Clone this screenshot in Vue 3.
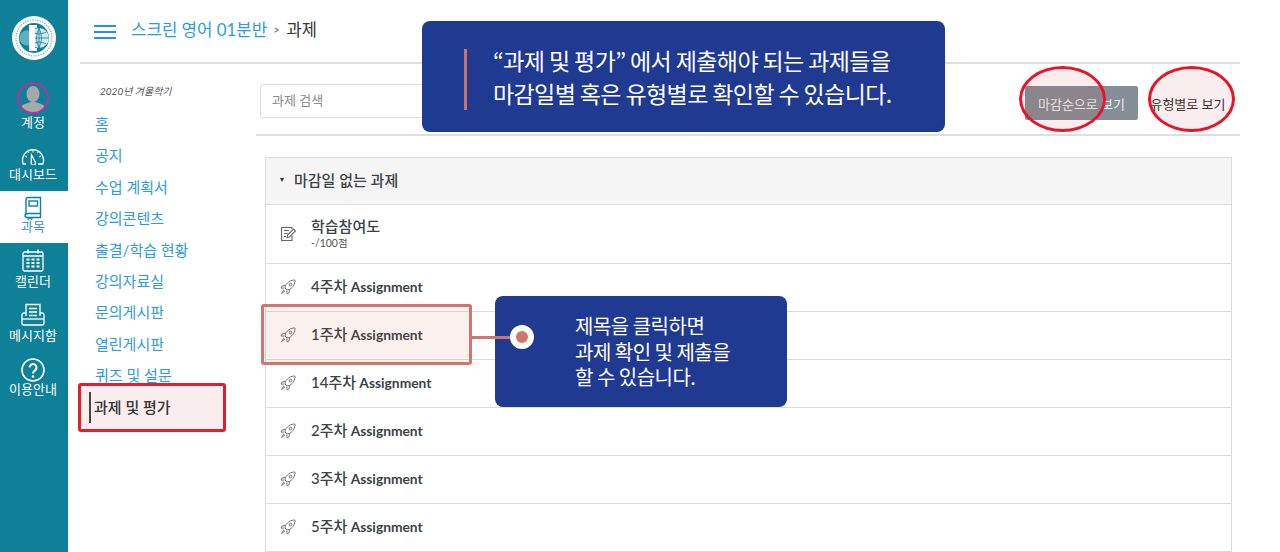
<template>
  <div class="page">
    <aside class="rail">
      <div class="rail__logo">
        <svg width="44" height="44" viewBox="0 0 44 44">
          <circle cx="22" cy="22" r="22" fill="#fff" />
          <circle cx="22" cy="22" r="18" fill="none" stroke="#7fb9c4" stroke-width="1.200" stroke-dasharray="1.500 1" />
          <circle cx="22" cy="22" r="15" fill="#0e8198" />
          <circle cx="27" cy="22" r="10" fill="#d3e8ec" />
          <path d="M18 22h19M27 12v20M20 16.500q7 3 14 0M20 27.500q7-3 14 0M27 12q-5 10 0 20M27 12q5 10 0 20" stroke="#0e8198" stroke-width="0.800" fill="none" />
          <circle cx="15" cy="22" r="7.500" fill="#5fb0c0" />
          <path d="M17 9h8v3h-2v20h2v3h-8z" fill="#fff" />
        </svg>
      </div>

      <a class="rail__item rail__item--account">
        <span class="avatar">
          <svg width="28" height="28" viewBox="0 0 28 28">
            <ellipse cx="14" cy="10" rx="6.500" ry="8" fill="#a8a8a8" />
            <path d="M1 25c1-5 8-6 13-7.500 5 1.500 12 2.500 13 7.500a14 14 0 0 1-26 0z" fill="#a8a8a8" />
          </svg>
        </span>
        <span>계정</span>
      </a>

      <a class="rail__item rail__item--board">
        <svg width="24" height="17" viewBox="0 0 24 17" fill="none" stroke="#fff" stroke-width="1.300">
          <path d="M5 16H2.200A10.500 10.500 0 1 1 21.800 16H17" />
          <path d="M12 2v2.500M4 8l1.800 1M20 8l-1.800 1M7 3.500l1 1.500M17 3.500l-1 1.500" stroke-width="1" />
          <path d="M10.500 7l3.500 6.500a2.200 2.200 0 1 1-3.800.8z" />
        </svg>
        <span>대시보드</span>
      </a>

      <a class="rail__item rail__item--course">
        <svg width="20" height="24" viewBox="0 0 20 24" fill="none" stroke="#0e8198" stroke-width="1.400">
          <path d="M3 19V3.500Q3 1.500 5 1.500H17.500V17.500H4.500Q2 17.500 2 19.500T4.500 21.500H17.500V17.500" />
          <rect x="6" y="5" width="8.500" height="5" />
          <path d="M5 21.500v2l2-1 2 1v-2" stroke-width="1" />
        </svg>
        <span>과목</span>
      </a>

      <a class="rail__item rail__item--calendar">
        <svg width="22" height="23" viewBox="0 0 22 23" fill="none" stroke="#fff" stroke-width="1.300">
          <rect x="1" y="3" width="20" height="19" rx="1.500" />
          <path d="M1 7h20M6 0.500v4M16 0.500v4" />
          <path d="M4.500 10.500h3M9.500 10.500h3M14.500 10.500h3M4.500 14h3M9.500 14h3M14.500 14h3M4.500 17.500h3M9.500 17.500h3M14.500 17.500h3" stroke-width="2" />
        </svg>
        <span>캘린더</span>
      </a>

      <a class="rail__item rail__item--inbox">
        <svg width="24" height="23" viewBox="0 0 24 23" fill="none" stroke="#fff" stroke-width="1.300">
          <path d="M5 13V1.500H19V13" />
          <path d="M8 5.500h8M8 9h8M8 12.500h8" />
          <path d="M5 10H3Q1 10 1 12V20Q1 22 3 22H21Q23 22 23 20V12Q23 10 21 10H19" />
          <path d="M1 16H23" />
        </svg>
        <span>메시지함</span>
      </a>

      <a class="rail__item rail__item--help">
        <svg width="24" height="24" viewBox="0 0 24 24" fill="none" stroke="#fff" stroke-width="1.600">
          <circle cx="12" cy="12" r="11" />
          <path d="M8.500 9.500a3.500 3.500 0 1 1 5.500 2.900c-1.300.9-2 1.500-2 3" stroke-width="2" />
          <circle cx="12" cy="18.500" r="1.300" fill="#fff" stroke="none" />
        </svg>
        <span>이용안내</span>
      </a>
    </aside>

    <div class="main">
      <header class="crumbs">
        <span class="burger"><i></i><i></i><i></i></span>
        <a class="crumbs__link">스크린 영어 01분반</a>
        <span class="crumbs__sep">&gt;</span>
        <span class="crumbs__here">과제</span>
      </header>

      <div class="body">
        <nav class="menu">
          <p class="menu__term">2020년 겨울학기</p>
          <a v-for="item in menuItems" :key="item" class="menu__link">{{ item }}</a>
          <a class="menu__link menu__link--on"><span>과제 및 평가</span></a>
        </nav>

        <section class="content">
          <div class="toolbar">
            <div class="search">과제 검색</div>
            <div class="toolbar__btns">
              <span class="ring ring--date">
                <button class="btn btn--active">마감순으로 보기</button>
              </span>
              <span class="ring ring--type">
                <button class="btn">유형별로 보기</button>
              </span>
            </div>
          </div>

          <div class="table">
            <div class="table__head"><span class="caret"></span>마감일 없는 과제</div>
            <div class="row row--tall">
              <svg class="row__icon" width="16" height="16" viewBox="0 0 16 16" fill="none" stroke="#666" stroke-width="1.100">
                <path d="M12 9.500V14.500H1.500V1.500H12V3" />
                <path d="M4 4.500h5M4 7.500h3.500M4 10.500h2" />
                <path d="M7 11.500l.5-2.500 6-6 2 2-6 6z" />
              </svg>
              <div>
                <div class="row__title row__title--ko">학습참여도</div>
                <div class="row__meta">-/100점</div>
              </div>
            </div>
            <div v-for="week in weeks" :key="week" class="row">
              <svg class="row__icon" width="16" height="16" viewBox="0 0 16 16" fill="none" stroke="#777" stroke-width="1">
                <path d="M15 1c-4 0-7 1.500-9.500 5.500L5 9l2 2 2.500-.5C13.500 8 15 5 15 1z" />
                <circle cx="10.500" cy="5.500" r="1.300" />
                <path d="M5.500 6.500L2 7l-1 2 3.500.2M9.500 10.500L9 14l-2 1-.2-3.500M4 11l-2.500 3.500L5 12" />
              </svg>
              <span class="row__title"><span class="row__title--ko">{{ week }}주차</span> Assignment</span>
            </div>
          </div>
        </section>
      </div>
    </div>

    <div class="note note--top">
      <span class="note__bar"></span>
      <p>“과제 및 평가” 에서 제출해야 되는 과제들을<br />마감일별 혹은 유형별로 확인할 수 있습니다.</p>
    </div>

    <div class="mark mark--row"></div>
    <div class="note note--row">
      <p>제목을 클릭하면<br />과제 확인 및 제출을<br />할 수 있습니다.</p>
    </div>
    <span class="leader"></span>
    <span class="dot"></span>
  </div>
</template>

<script setup>
const menuItems = [
  "홈",
  "공지",
  "수업 계획서",
  "강의콘텐츠",
  "출결/학습 현황",
  "강의자료실",
  "문의게시판",
  "열린게시판",
  "퀴즈 및 설문",
];

const weeks = [4, 1, 14, 2, 3, 5];
</script>

<style>
html,
body {
  margin: 0;
  overflow: hidden;
}
</style>

<style scoped>
* {
  box-sizing: border-box;
}
.page {
  position: relative;
  display: flex;
  width: 1280px;
  height: 552px;
  overflow: hidden;
  background: #fff;
  font-family: Lato, "Noto Sans CJK KR", sans-serif;
  color: #2d3b45;
}
.rail {
  width: 68px;
  flex: none;
  background: #0e8198;
  display: flex;
  flex-direction: column;
  align-items: stretch;
  padding-top: 16px;
}
.rail__logo {
  height: 44px;
  display: flex;
  justify-content: center;
  padding-right: 1px;
}
.rail__item {
  display: flex;
  flex-direction: column;
  align-items: center;
  color: #fff;
  font-size: 13px;
  line-height: 14px;
  padding-right: 2px;
}
.rail__item--account {
  margin-top: 22px;
  height: 48px;
}
.avatar {
  width: 32px;
  height: 32px;
  flex: none;
  border: 2px solid #b5329b;
  border-radius: 50%;
  overflow: hidden;
  margin-bottom: 1px;
}
.avatar svg {
  display: block;
}
.rail__item--board {
  height: 45px;
  margin-top: 16px;
  padding-top: 2px;
  gap: 2px;
}
.rail__item--course {
  height: 52px;
  padding-top: 5px;
  gap: 0;
  background: #fff;
  color: #3f9aad;
}
.rail__item--course span {
  margin-top: -1px;
}
.rail__item--calendar {
  height: 52px;
  padding-top: 6px;
  gap: 2px;
}
.rail__item--inbox {
  height: 54px;
  padding-top: 8px;
  gap: 2px;
}
.rail__item--help {
  padding-top: 9px;
  gap: 0;
}
.main {
  flex: none;
  width: 1160px;
  margin-left: 12px;
  display: flex;
  flex-direction: column;
}
.crumbs {
  height: 64px;
  flex: none;
  border-bottom: 2px solid #dcdfe2;
  display: flex;
  align-items: center;
  padding: 0 0 5px 14px;
  font-size: 16.800px;
}
.burger {
  width: 22px;
  display: flex;
  flex-direction: column;
  gap: 4px;
  margin-right: 15px;
  margin-top: 7px;
}
.burger i {
  display: block;
  height: 2px;
  background: #2f8fdc;
}
.crumbs__link {
  color: #2d9be0;
}
.crumbs__sep {
  font-size: 11px;
  color: #666;
  margin: 2px 7px 0 6px;
}
.crumbs__here {
  color: #333;
  font-size: 16.500px;
}
.body {
  display: flex;
  flex: 1;
  min-height: 0;
}
.menu {
  width: 176px;
  flex: none;
  display: flex;
  flex-direction: column;
  padding: 18px 0 0 15px;
  font-size: 15px;
}
.menu__term {
  margin: 0 0 9px 5px;
  height: 18px;
  font-size: 10px;
  line-height: 18px;
  font-style: italic;
  color: #555;
}
.menu__link {
  height: 31.400px;
  line-height: 31.400px;
  color: #2d9be0;
  white-space: nowrap;
}
.menu__link--on {
  position: relative;
  width: 148px;
  height: 49px;
  margin: -9px 0 0 -17px;
  border: 3px solid #e01f2f;
  border-radius: 3px;
  background: #f9eeed;
  color: #333;
  font-weight: 500;
  line-height: 43px;
  padding: 0 0 0 13px;
  z-index: 1;
}
.menu__link--on::before {
  content: "";
  position: absolute;
  left: 8px;
  top: 6px;
  bottom: 6px;
  width: 2px;
  background: #444;
}
.content {
  flex: 1;
  min-width: 0;
  display: flex;
  flex-direction: column;
}
.toolbar {
  height: 72px;
  flex: none;
  border-bottom: 2px solid #dcdfe2;
  display: flex;
  align-items: center;
  justify-content: space-between;
  padding: 8px 14px 0 4px;
}
.search {
  width: 300px;
  height: 34px;
  margin-bottom: 4px;
  border: 1px solid #dcdfe2;
  border-radius: 3px;
  font-size: 13px;
  line-height: 30px;
  padding-left: 11px;
  color: #8c8c8c;
}
.toolbar__btns {
  display: flex;
  align-items: center;
}
.ring {
  position: relative;
  display: flex;
}
.ring::after {
  content: "";
  box-sizing: border-box;
  position: absolute;
  top: -20px;
  width: 87px;
  height: 66px;
  border: 3px solid #e5152c;
  border-radius: 50%;
  background: rgba(180, 42, 30, 0.08);
  z-index: 2;
}
.ring--date::after {
  left: -6px;
}
.ring--type {
  margin-left: 12px;
}
.ring--type::after {
  left: -2px;
}
.btn {
  height: 34px;
  width: 113px;
  border: 0;
  border-radius: 2px;
  padding: 0;
  background: transparent;
  font-family: inherit;
  font-size: 13px;
  color: #333;
  white-space: nowrap;
}
.btn--active {
  background: #878f96;
  color: #eceef0;
}
.ring--type .btn {
  width: 76px;
}
.table {
  width: 967px;
  margin: 21px 0 0 9px;
  border: 1px solid #d9dde0;
  border-bottom: 0;
  flex: none;
}
.table__head {
  height: 47px;
  background: #f5f5f5;
  border-bottom: 1px solid #d9dde0;
  display: flex;
  align-items: center;
  padding: 0 0 3px 14px;
  font-size: 15px;
  font-weight: 500;
  color: #3a4348;
}
.caret {
  width: 0;
  height: 0;
  border-left: 2.500px solid transparent;
  border-right: 2.500px solid transparent;
  border-top: 4px solid #333;
  margin-right: 10px;
}
.row {
  height: 48px;
  display: flex;
  align-items: center;
  border-bottom: 1px solid #d9dde0;
  padding: 0 0 2px 14px;
  gap: 15px;
}
.row--tall {
  height: 59px;
  padding-bottom: 0;
}
.row__icon {
  flex: none;
}
.row__title {
  font-size: 13.800px;
  line-height: 18px;
  font-weight: 700;
  color: #3a4348;
}
.row__title--ko {
  font-size: 15px;
  font-weight: 500;
}
.row__meta {
  font-size: 10.500px;
  line-height: 16px;
  color: #555;
}
.note {
  position: absolute;
  background: #203a92;
  border-radius: 8px;
  color: #fff;
  font-family: "Noto Sans CJK KR", sans-serif;
}
.note p {
  margin: 0;
}
.note--top {
  left: 422px;
  top: 21px;
  width: 523px;
  height: 111px;
  padding: 23px 0 0 71px;
  font-size: 23px;
  line-height: 33px;
  letter-spacing: -0.600px;
  white-space: nowrap;
}
.note__bar {
  position: absolute;
  left: 42px;
  top: 28px;
  width: 3px;
  height: 61px;
  background: #c9716b;
}
.note--row {
  left: 495px;
  top: 296px;
  width: 292px;
  height: 111px;
  padding: 17px 0 0 80px;
  font-size: 20px;
  line-height: 25.500px;
  letter-spacing: -0.500px;
}
.mark--row {
  position: absolute;
  left: 261px;
  top: 304px;
  width: 211px;
  height: 61px;
  border: 3px solid #cf7670;
  border-radius: 3px;
  background: rgba(200, 90, 70, 0.09);
}
.leader {
  position: absolute;
  left: 472px;
  top: 336px;
  width: 48px;
  height: 3px;
  background: #cf7670;
}
.dot {
  position: absolute;
  left: 510px;
  top: 325px;
  width: 24px;
  height: 24px;
  border-radius: 50%;
  background: #cf7670;
  border: 6px solid #fff;
}
</style>
